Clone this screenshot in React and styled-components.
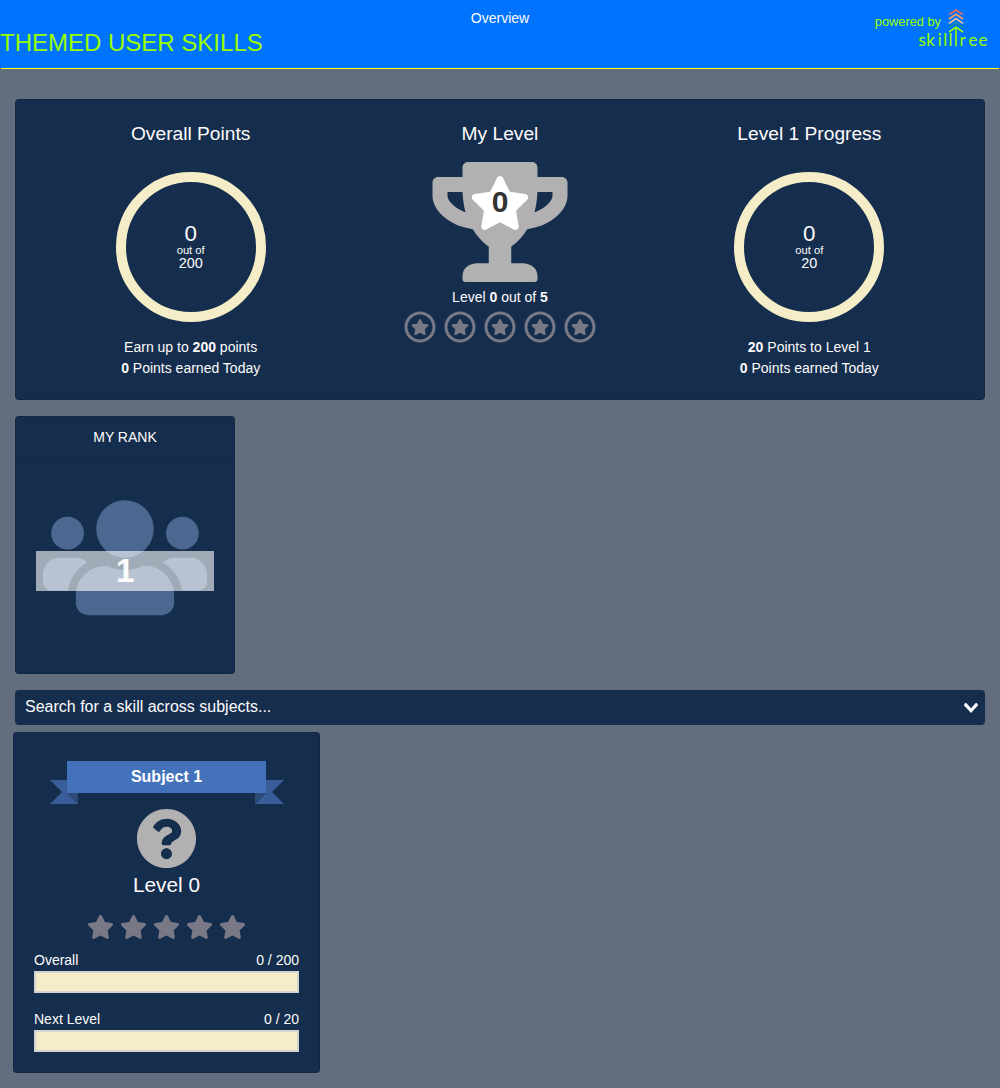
import React from 'react';
import styled, { createGlobalStyle } from 'styled-components';
import { FaTrophy, FaStar, FaUsers, FaQuestionCircle, FaRegCircle } from 'react-icons/fa';

const color = {
  page: '#626d7d',
  tile: '#152e4d',
  header: '#0073ff',
  lime: '#9bff00',
  text: '#fdfbfb',
  ring: '#f5edc8',
  star: '#787886',
  silver: '#b1b1b1',
};

const GlobalStyle = createGlobalStyle`
  *, *::before, *::after { box-sizing: border-box; }
  body {
    margin: 0;
    min-height: 1088px;
    background: ${color.page};
    color: ${color.text};
    font: 14px/21px "Liberation Sans", Arial, sans-serif;
  }
  svg { display: block; flex: none; }
`;

const Header = styled.header`
  display: grid;
  grid-template-columns: 1fr auto 1fr;
  grid-template-rows: 27px 41px;
  height: 68px;
  background: ${color.header};
`;

const HeaderRule = styled.div`
  height: 1px;
  margin: 0 1px;
  background: #f4ff1c;
`;

const Crumb = styled.div`
  grid-column: 2;
  padding-top: 8px;
`;

const PageTitle = styled.h1`
  grid-column: 1;
  grid-row: 2;
  margin: 0;
  padding-top: 1px;
  font-size: 24px;
  font-weight: 400;
  line-height: 29px;
  white-space: nowrap;
  color: ${color.lime};
`;

const Brand = styled.div`
  grid-column: 3;
  grid-row: 1 / 3;
  justify-self: end;
  display: flex;
  margin-right: 10px;
  color: ${color.lime};
  font-size: 12.8px;
`;

const PoweredBy = styled.span`
  padding-top: 11px;
  margin-right: -23px;
`;

const Main = styled.main`
  padding: 30px 15px 15px;
`;

const Card = styled.section`
  background: ${color.tile};
  border: 1px solid rgba(0, 0, 0, 0.125);
  border-radius: 4px;
`;

const Summary = styled(Card)`
  display: grid;
  grid-template-columns: repeat(3, 1fr);
  height: 301px;
  padding: 20px;
  text-align: center;
`;

const Column = styled.div`
  display: flex;
  flex-direction: column;
  align-items: center;
`;

const ColumnTitle = styled.h2`
  margin: 0 0 ${(p) => p.$gap}px;
  padding-top: 2px;
  font-size: 19.2px;
  font-weight: 400;
  line-height: 23px;
`;

const Ring = styled.div`
  display: flex;
  flex-direction: column;
  align-items: center;
  justify-content: center;
  width: 150px;
  height: 150px;
  margin-bottom: 15px;
  padding-bottom: 2px;
  border: 10px solid ${color.ring};
  border-radius: 50%;
`;

const RingValue = styled.div`
  font-size: 22.4px;
  line-height: 22px;
  padding-top: 1px;
`;

const RingLabel = styled.div`
  font-size: 11.2px;
  line-height: 11px;
`;

const RingTotal = styled.div`
  font-size: 14.4px;
  line-height: 15px;
`;

const Trophy = styled.div`
  display: grid;
  justify-items: center;
  width: 136px;
  margin-bottom: 5px;
  color: ${color.silver};
  > * { grid-area: 1 / 1; }
`;

const TrophyStar = styled.div`
  display: grid;
  justify-items: center;
  align-self: start;
  margin-top: 14px;
  color: #fff;
  > * { grid-area: 1 / 1; }
`;

const TrophyLevel = styled.b`
  margin-top: 11px;
  color: #333;
  font-size: 30px;
  line-height: 30px;
`;

const Badges = styled.div`
  display: flex;
  gap: 8px;
  margin-top: 3px;
  color: ${color.star};
`;

const Badge = styled.div`
  display: grid;
  place-items: center;
  > * { grid-area: 1 / 1; }
`;

const Rank = styled(Card)`
  width: 220px;
  height: 258px;
  margin: 16px 0;
`;

const RankTitle = styled.div`
  height: 42px;
  padding-top: 10px;
  border-bottom: 1px solid rgba(0, 0, 0, 0.125);
  text-align: center;
`;

const RankBody = styled.div`
  display: grid;
  justify-items: center;
  padding: 33px 20px 0;
  > * { grid-area: 1 / 1; }
`;

const RankBand = styled.div`
  z-index: 1;
  width: 178px;
  height: 40px;
  margin-top: 59px;
  background: rgba(255, 255, 255, 0.6);
  font-size: 33.6px;
  font-weight: 700;
  line-height: 40px;
  text-align: center;
`;

const Search = styled.div`
  display: flex;
  align-items: center;
  justify-content: space-between;
  height: 35px;
  padding: 0 7px 0 10px;
  background: ${color.tile};
  border-radius: 4px;
  font-size: 16px;
  line-height: 24px;
`;

const SearchText = styled.span`
  margin-top: -2px;
`;

const Subject = styled(Card)`
  display: flex;
  flex-direction: column;
  align-items: center;
  width: 307px;
  height: 341px;
  margin: 7px 0 0 -2px;
  padding: 28px 20px 20px;
  > * { flex: none; }
`;

const Ribbon = styled.h2`
  position: relative;
  width: 199px;
  height: 32px;
  margin: 0 0 15px;
  background: #4472ba;
  color: #fff;
  font-size: 16px;
  line-height: 31px;
  text-align: center;
`;

const RibbonTail = styled.svg`
  position: absolute;
  top: 19px;
  ${(p) => (p.$right ? 'right: -18px;' : 'left: -17px;')}
`;

const SubjectLevel = styled.div`
  margin-bottom: 18px;
  padding-top: 3px;
  font-size: 20.8px;
  line-height: 25px;
`;

const Stars = styled.div`
  display: flex;
  gap: 6px;
  margin-bottom: 11px;
  color: ${color.star};
`;

const Meters = styled.div`
  display: grid;
  gap: 16px;
  width: 100%;
`;

const MeterText = styled.div`
  display: flex;
  justify-content: space-between;
`;

const MeterBar = styled.div`
  height: 22px;
  background: ${color.ring};
  border: 2px solid lightgray;
`;

const LogoWord = styled.text`
  font-family: Lato, sans-serif;
  font-size: 17px;
  font-weight: 400;
`;

const Logo = () => (
  <svg width="72" height="50" viewBox="918 0 72 50" fill="none" strokeWidth="1.6">
    <path d="M949 14.7l7-4.7 7 4.7" stroke="#f0694f" />
    <path d="M949 19l7-4.7 7 4.7" stroke="#f39b62" />
    <path d="M949 23.3l7-4.7 7 4.7" stroke="#f5c98a" />
    <path d="M949 27.6l7-4.7 7 4.7" stroke="#15948f" />
    <path d="M949 32l7-4.8 7 4.8M956 27.5v18.7" stroke={color.lime} />
    <LogoWord x="918.6 926.2 937.7 943.2 948.6" y="46.2" fill={color.lime}>skill</LogoWord>
    <LogoWord x="959.6 968.5 978.6" y="46.2" fill={color.lime}>ree</LogoWord>
  </svg>
);

const LeftTail = () => (
  <RibbonTail width="28" height="24" viewBox="0 0 28 24">
    <path d="M0 0h17v13l11 11H0l12-12z" fill="#395d99" />
    <path d="M17 13h11v11z" fill="#2e4a78" />
  </RibbonTail>
);

const RightTail = () => (
  <RibbonTail $right width="29" height="24" viewBox="0 0 29 24">
    <path d="M29 0H11v13L0 24h29L17 12z" fill="#395d99" />
    <path d="M11 13H0v11z" fill="#2e4a78" />
  </RibbonTail>
);

const Progress = ({ title, total, children }) => (
  <Column>
    <ColumnTitle $gap={27}>{title}</ColumnTitle>
    <Ring>
      <RingValue>0</RingValue>
      <RingLabel>out of</RingLabel>
      <RingTotal>{total}</RingTotal>
    </Ring>
    <div>{children}</div>
    <div><b>0</b> Points earned Today</div>
  </Column>
);

const LabeledMeter = ({ label, value }) => (
  <div>
    <MeterText><span>{label}</span><span>{value}</span></MeterText>
    <MeterBar />
  </div>
);

const TrophyIcon = styled(FaTrophy)`
  width: 136px;
  height: 120px;
`;

const TrophyStarIcon = styled(FaStar)`
  width: 62px;
  height: 54px;
`;

const PeopleIcon = styled(FaUsers)`
  width: 164px;
  height: 131.5px;
  color: #4d6890;
`;

const BadgeStar = styled(FaStar)`
  width: 18px;
  height: 16px;
`;

const LevelStar = styled(FaStar)`
  width: 27px;
  height: 24px;
`;

const five = [1, 2, 3, 4, 5];

export default function App() {
  return (
    <>
      <GlobalStyle />
      <Header>
        <Crumb>Overview</Crumb>
        <PageTitle>THEMED USER SKILLS</PageTitle>
        <Brand>
          <PoweredBy>powered by</PoweredBy>
          <Logo />
        </Brand>
      </Header>
      <HeaderRule />
      <Main>
        <Summary>
          <Progress title="Overall Points" total="200">Earn up to <b>200</b> points</Progress>
          <Column>
            <ColumnTitle $gap={17}>My Level</ColumnTitle>
            <Trophy>
              <TrophyIcon />
              <TrophyStar>
                <TrophyStarIcon />
                <TrophyLevel>0</TrophyLevel>
              </TrophyStar>
            </Trophy>
            <div>Level <b>0</b> out of <b>5</b></div>
            <Badges>
              {five.map((n) => (
                <Badge key={n}>
                  <FaRegCircle size={32} />
                  <BadgeStar />
                </Badge>
              ))}
            </Badges>
          </Column>
          <Progress title="Level 1 Progress" total="20"><b>20</b> Points to Level 1</Progress>
        </Summary>
        <Rank>
          <RankTitle>MY RANK</RankTitle>
          <RankBody>
            <PeopleIcon />
            <RankBand>1</RankBand>
          </RankBody>
        </Rank>
        <Search>
          <SearchText>Search for a skill across subjects...</SearchText>
          <svg width="14" height="10" viewBox="0 0 14 10" fill={color.text}>
            <path d="M9.211364 7.59931l4.48338-4.867229c.407008-.441854.407008-1.158247 0-1.60046l-.73712-.80023c-.407008-.441854-1.066904-.441854-1.474243 0L7 5.198617 2.51662.33139c-.407008-.441853-1.066904-.441853-1.474243 0l-.737121.80023c-.407008.441854-.407008 1.158248 0 1.600461l4.48338 4.867228L7 10l2.211364-2.40069z" />
          </svg>
        </Search>
        <Subject>
          <Ribbon>
            <LeftTail />
            <RightTail />
            Subject 1
          </Ribbon>
          <FaQuestionCircle size={61} color={color.silver} />
          <SubjectLevel>Level 0</SubjectLevel>
          <Stars>
            {five.map((n) => <LevelStar key={n} />)}
          </Stars>
          <Meters>
            <LabeledMeter label="Overall" value="0 / 200" />
            <LabeledMeter label="Next Level" value="0 / 20" />
          </Meters>
        </Subject>
      </Main>
    </>
  );
}
